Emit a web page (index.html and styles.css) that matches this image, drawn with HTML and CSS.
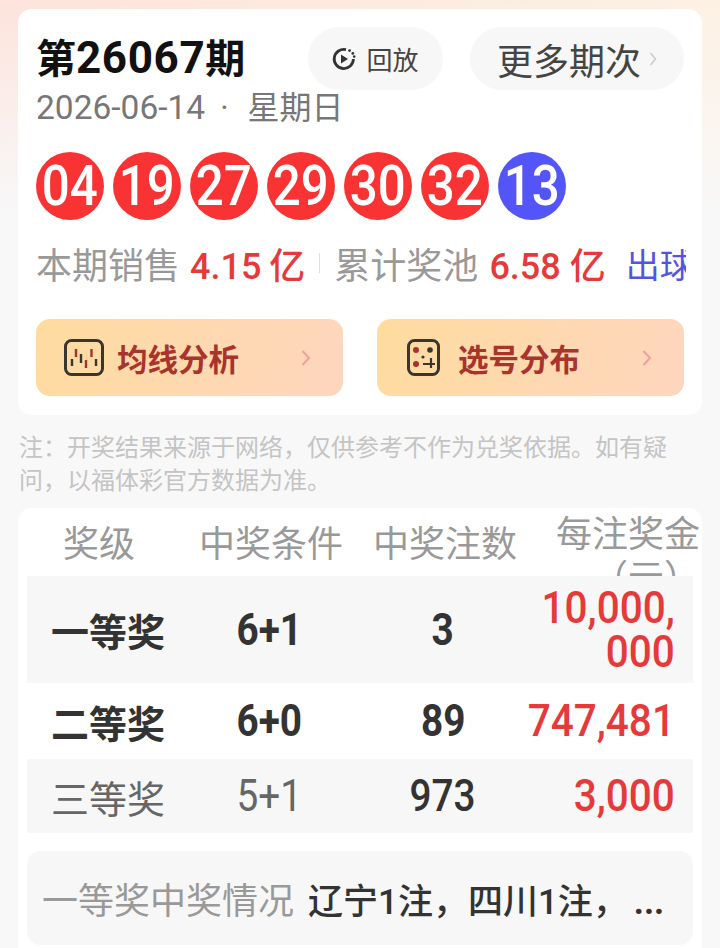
FILE: index.html
```html
<!DOCTYPE html>
<html lang="zh-CN">
<head>
    <meta charset="UTF-8">
    <meta name="viewport" content="width=device-width, initial-scale=1.0">
    <title>开奖详情</title>
    <link rel="stylesheet" href="styles.css">
</head>
<body>
    <div class="card draw">
        <div class="draw-top">
            <h1 class="issue">第<span class="issue-no">26067</span>期</h1>
            <div class="pill replay">
                <svg class="replay-icon" viewBox="0 0 24 26">
                    <path d="M14 3.6A9.6 9.6 0 1 0 21.4 13" fill="none" stroke="#333" stroke-width="2.8"/>
                    <circle cx="17.6" cy="4.6" r="1.4" fill="#333"/>
                    <circle cx="20.8" cy="7.4" r="1.4" fill="#333"/>
                    <circle cx="22.2" cy="10.6" r="1.3" fill="#333"/>
                    <path d="M9 8.4L16 13L9 17.6Z" fill="#333"/>
                </svg>
                <span>回放</span>
            </div>
            <div class="pill more">
                <span>更多期次</span>
                <svg class="more-arrow" viewBox="0 0 8 16"><path d="M1.5 2L6.5 8L1.5 14" fill="none" stroke="#ccc" stroke-width="1.6"/></svg>
            </div>
        </div>
        <div class="date"><span class="date-num">2026-06-14</span><span class="date-dot">·</span>星期日</div>
        <div class="balls">
            <div class="ball"><span class="din">04</span></div>
            <div class="ball"><span class="din">19</span></div>
            <div class="ball"><span class="din">27</span></div>
            <div class="ball"><span class="din">29</span></div>
            <div class="ball"><span class="din">30</span></div>
            <div class="ball"><span class="din">32</span></div>
            <div class="ball blue"><span class="din">13</span></div>
        </div>
        <div class="stats">
            <span class="stat-label">本期销售</span>
            <span class="stat-value">4.15 亿</span>
            <span class="stat-sep"></span>
            <span class="stat-label">累计奖池</span>
            <span class="stat-value pool">6.58 亿</span>
            <span class="stat-link">出球顺序</span>
        </div>
        <div class="tools">
            <div class="tool">
                <svg class="tool-icon" viewBox="0 0 40 37">
                    <rect x="1.5" y="1.5" width="37" height="34" rx="6" fill="none" stroke="#3b3530" stroke-width="3"/>
                    <path d="M12 10V18M27.5 10V18" stroke="#a8322a" stroke-width="2.4"/>
                    <path d="M8 20V27M17 15V24M32 20V27" stroke="#3b3530" stroke-width="2.4"/>
                    <path d="M22 21V29" stroke="#a8322a" stroke-width="2.4"/>
                </svg>
                <span class="tool-name">均线分析</span>
                <svg class="tool-arrow" viewBox="0 0 10 18"><path d="M1.5 2L8 9L1.5 16" fill="none" stroke="#f0a09a" stroke-width="2"/></svg>
            </div>
            <div class="tool">
                <svg class="tool-icon dice" viewBox="0 0 33 37">
                    <rect x="1.5" y="1.5" width="30" height="34" rx="6" fill="none" stroke="#3b3530" stroke-width="3"/>
                    <circle cx="9" cy="11" r="3" fill="#a8322a"/>
                    <circle cx="9" cy="25" r="3" fill="#a8322a"/>
                    <circle cx="23" cy="11" r="2.8" fill="#3b3530"/>
                    <circle cx="16" cy="18" r="1.6" fill="#3b3530"/>
                    <path d="M16 25H28M24 19V29" stroke="#3b3530" stroke-width="2.2"/>
                </svg>
                <span class="tool-name">选号分布</span>
                <svg class="tool-arrow" viewBox="0 0 10 18"><path d="M1.5 2L8 9L1.5 16" fill="none" stroke="#f0a09a" stroke-width="2"/></svg>
            </div>
        </div>
    </div>

    <p class="note">注：开奖结果来源于网络，仅供参考不作为兑奖依据。如有疑问，以福体彩官方数据为准。</p>

    <div class="card prizes">
        <div class="prize-head">
            <div>奖级</div>
            <div>中奖条件</div>
            <div>中奖注数</div>
            <div class="head-money">每注奖金（元）</div>
        </div>
        <div class="prize-row first shaded">
            <div class="level">一等奖</div>
            <div class="cond"><span class="din">6+1</span></div>
            <div class="count"><span class="din">3</span></div>
            <div class="money"><span class="din">10,000,<br>000</span></div>
        </div>
        <div class="prize-row second">
            <div class="level">二等奖</div>
            <div class="cond"><span class="din">6+0</span></div>
            <div class="count"><span class="din">89</span></div>
            <div class="money"><span class="din">747,481</span></div>
        </div>
        <div class="prize-row third shaded">
            <div class="level">三等奖</div>
            <div class="cond"><span class="din">5+1</span></div>
            <div class="count"><span class="din">973</span></div>
            <div class="money"><span class="din">3,000</span></div>
        </div>
        <div class="winners">
            <span class="winners-label">一等奖中奖情况</span>
            <span class="winners-list">辽宁1注，四川1注，<span class="winners-more">...</span></span>
        </div>
    </div>
</body>
</html>
```

FILE: styles.css
```css
html, body {
    height: 948px;
    overflow: hidden;
}
body {
    margin: 0;
    padding-top: 9px;
    box-sizing: border-box;
    font-family: Roboto, "Noto Sans CJK SC", sans-serif;
    color: #333;
    background-color: #f8f8f8;
    background-image: linear-gradient(to bottom, rgba(248,248,248,0) 0, #f8f8f8 210px), linear-gradient(to right, #fde3dc, #fdf1e3);
}
.card {
    margin: 0 18px;
    background-color: white;
    border-radius: 14px;
}
/* digits in the reference are narrower than Roboto */
.din {
    display: inline-block;
    transform: scaleX(0.88);
}
.draw {
    padding: 18px;
    height: 406px;
    box-sizing: border-box;
}
.draw-top {
    display: flex;
    align-items: center;
    height: 63px;
}
.issue {
    margin: 0;
    width: 272px;
    font-size: 40px;
    font-weight: 700;
    line-height: 63px;
    color: #111;
    white-space: nowrap;
}
.issue-no {
    font-size: 44px;
    letter-spacing: 0.6px;
}
.pill {
    display: flex;
    align-items: center;
    height: 63px;
    background-color: #f7f7f7;
    border-radius: 32px;
    color: #444;
}
.replay {
    width: 135px;
    justify-content: center;
    gap: 10px;
    font-size: 26px;
}
.replay-icon {
    width: 24px;
    height: 26px;
}
.more {
    width: 214px;
    margin-left: 27px;
    padding-left: 27px;
    box-sizing: border-box;
    gap: 8px;
    font-size: 36px;
}
.more-arrow {
    width: 8px;
    height: 16px;
}
.date {
    font-size: 32px;
    line-height: 36px;
    color: #777;
    white-space: nowrap;
}
.date-num {
    font-size: 33.5px;
}
.date-dot {
    margin: 0 19px 0 15px;
}
.balls {
    display: flex;
    gap: 9px;
    margin-top: 26px;
}
.ball {
    width: 68px;
    height: 68px;
    border-radius: 50%;
    background-color: #f93333;
    color: white;
    font-size: 56px;
    font-weight: 500;
    line-height: 68px;
    text-align: center;
    white-space: nowrap;
}
.ball.blue {
    background-color: #5355f8;
}
.stats {
    display: flex;
    align-items: center;
    margin: 23px -2px 0 0;
    height: 40px;
    overflow: hidden;
    white-space: nowrap;
}
.stat-label {
    font-size: 36px;
    color: #999;
}
.stat-value {
    margin-left: 10px;
    font-size: 36px;
    font-weight: 500;
    word-spacing: -1px;
    color: #e63a3a;
}
.stat-value.pool {
    margin-left: 11px;
    word-spacing: 0;
}
.stat-sep {
    flex: none;
    width: 1px;
    height: 20px;
    margin: 0 14px;
    background-color: #ddd;
}
.stat-link {
    margin-left: 20px;
    font-size: 34px;
    color: #5355e0;
}
.tools {
    display: flex;
    justify-content: space-between;
    margin-top: 36px;
}
.tool {
    display: flex;
    align-items: center;
    width: 307px;
    height: 77px;
    box-sizing: border-box;
    padding: 0 32px 0 28px;
    border-radius: 14px;
    background-image: linear-gradient(110deg, #fedc9f, #fed6bf);
}
.tool:last-child {
    padding-left: 30px;
}
.tool-icon {
    flex: none;
    width: 40px;
    height: 37px;
}
.tool-icon.dice {
    width: 33px;
}
.tool-name {
    flex: 1;
    margin-left: 13px;
    font-size: 30.5px;
    font-weight: 700;
    color: #a8342c;
}
.tool:last-child .tool-name {
    margin-left: 18px;
}
.tool-arrow {
    flex: none;
    width: 10px;
    height: 18px;
}
.note {
    margin: 17px 32px 0 19px;
    font-size: 24px;
    line-height: 33px;
    color: #c4c4c4;
}
.prizes {
    margin-top: 10px;
    padding: 0 9px;
    height: 460px;
    overflow: hidden;
}
.prize-head {
    display: grid;
    grid-template-columns: 144px 200px 148px 181px;
    grid-template-rows: 63px;
    align-items: center;
    height: 68px;
    margin-right: -7px;
    box-sizing: border-box;
    padding-top: 5px;
    overflow: hidden;
    font-size: 36px;
    line-height: 44px;
    color: #999;
    text-align: center;
}
.prize-head .head-money {
    align-self: start;
    text-align: right;
}
.prize-row {
    display: grid;
    grid-template-columns: 162px 160px 188px 156px;
    align-items: center;
    text-align: center;
    font-size: 44px;
}
.prize-row.shaded {
    background-color: #f7f7f7;
}
.prize-row.first {
    height: 107px;
}
.prize-row.second {
    height: 76px;
}
.prize-row.third {
    height: 74px;
}
.level {
    font-size: 38px;
}
.cond, .count {
    font-weight: 500;
}
.first .level, .second .level, .first .cond, .second .cond, .first .count, .second .count {
    font-weight: 700;
}
.third .level, .third .cond {
    font-weight: 400;
    color: #666;
}
.money {
    margin-left: -30px;
    padding-right: 18px;
    line-height: 44px;
    text-align: right;
    font-weight: 500;
    white-space: nowrap;
    color: #e63a3a;
}
.money .din {
    transform: scaleX(0.92);
    transform-origin: right center;
}
.winners {
    display: flex;
    align-items: center;
    gap: 14px;
    height: 94px;
    margin-top: 18px;
    padding: 0 15px;
    background-color: #f7f7f7;
    border-radius: 14px;
    font-size: 36px;
    white-space: nowrap;
}
.winners-label {
    color: #999;
}
.winners-list {
    font-size: 35px;
    font-weight: 500;
}
.winners-more {
    margin-left: 6px;
    font-weight: 700;
}
```
